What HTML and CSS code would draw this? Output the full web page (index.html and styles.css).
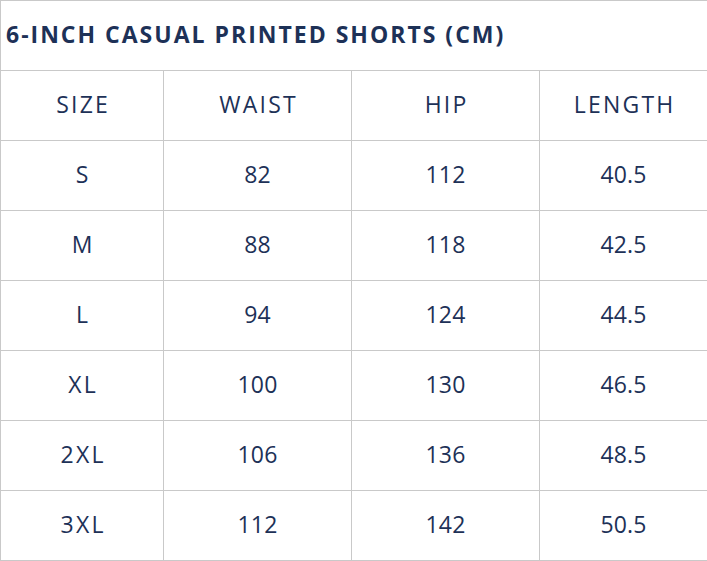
FILE: index.html
```html
<!DOCTYPE html>
<html>
<head>
<meta charset="utf-8">
<link rel="stylesheet" href="styles.css">
</head>
<body>
<table class="chart">
  <colgroup>
    <col class="c1"><col class="c2"><col class="c3"><col class="c4">
  </colgroup>
  <tr><th class="title" colspan="4">6-INCH CASUAL PRINTED SHORTS (CM)</th></tr>
  <tr class="head"><td>SIZE</td><td>WAIST</td><td>HIP</td><td>LENGTH</td></tr>
  <tr><td class="size">S</td><td>82</td><td>112</td><td>40.5</td></tr>
  <tr><td class="size">M</td><td>88</td><td>118</td><td>42.5</td></tr>
  <tr><td class="size">L</td><td>94</td><td>124</td><td>44.5</td></tr>
  <tr><td class="size">XL</td><td>100</td><td>130</td><td>46.5</td></tr>
  <tr><td class="size">2XL</td><td>106</td><td>136</td><td>48.5</td></tr>
  <tr><td class="size">3XL</td><td>112</td><td>142</td><td>50.5</td></tr>
</table>
</body>
</html>
```
FILE: styles.css
```css
html, body {
  margin: 0;
  padding: 0;
  background: #ffffff;
}
.chart {
  border-collapse: collapse;
  width: 707px;
  table-layout: fixed;
  font-family: "Open Sans", "Liberation Sans", sans-serif;
  color: #1d3157;
}
.c1 { width: 163px; }
.c2 { width: 188px; }
.c3 { width: 188px; }
.c4 { width: 168px; }
.chart th, .chart td {
  border: 1px solid #c9c9c9;
  height: 65px;
  padding: 0 0 4px 0;
  text-align: center;
  font-size: 23px;
  font-weight: 400;
  letter-spacing: 0.2px;
}
.chart .head td {
  letter-spacing: 2.2px;
  text-indent: 2.2px;
}
.chart td.size {
  letter-spacing: 2.2px;
  text-indent: 2.2px;
}
.chart th.title {
  text-align: left;
  padding: 0 0 4px 5px;
  font-weight: 700;
  letter-spacing: 2px;
}
```
